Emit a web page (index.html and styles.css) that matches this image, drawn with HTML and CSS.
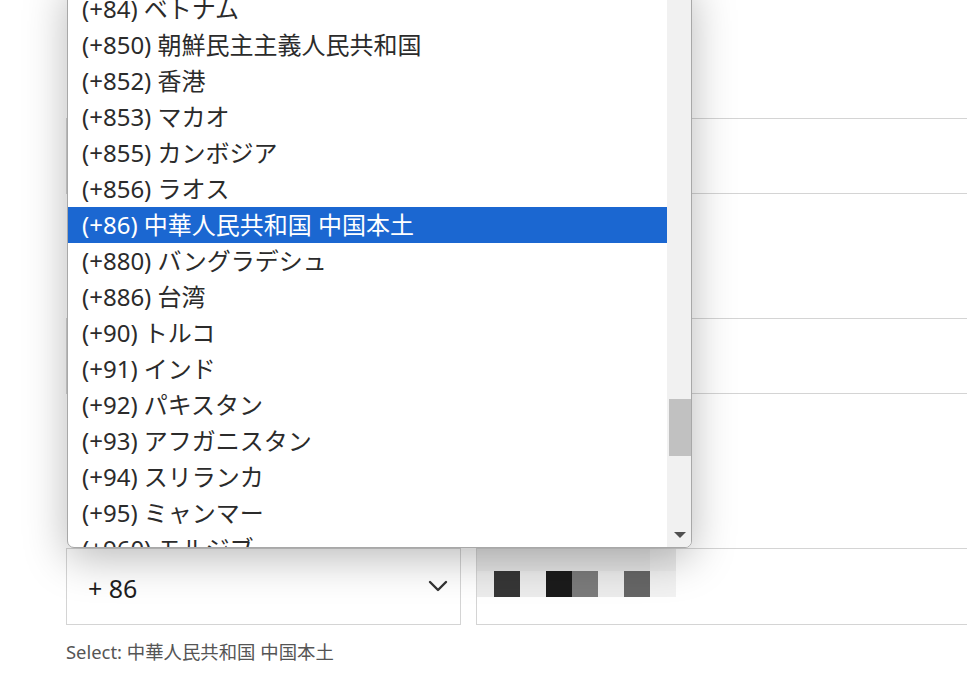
FILE: index.html
```html
<!DOCTYPE html>
<html lang="ja">
<head>
<meta charset="utf-8">
<title>Phone</title>
<link rel="stylesheet" href="styles.css">
</head>
<body>
<div class="page">
  <div class="field field-a"></div>
  <div class="field field-b"></div>
  <div class="phone-row">
    <div class="code-select">
      <span class="code-value">+ 86</span>
      <svg class="chevron" width="20" height="13" viewBox="0 0 20 13"><polyline points="2,2 10,10 18,2" fill="none" stroke="#333" stroke-width="2.4" stroke-linecap="round" stroke-linejoin="round"/></svg>
    </div>
    <div class="phone-input">
      <div class="mosaic">
        <div class="mrow mrow-1">
          <span class="m w17 c1"></span><span class="m c1"></span><span class="m c1"></span><span class="m c1"></span><span class="m c1"></span><span class="m c1"></span><span class="m c1"></span><span class="m c1 fade"></span>
        </div>
        <div class="mrow mrow-2">
          <span class="m w17 cl"></span><span class="m c36"></span><span class="m cl"></span><span class="m c1b"></span><span class="m c7b"></span><span class="m cl"></span><span class="m c66"></span><span class="m cl fade"></span>
        </div>
      </div>
    </div>
  </div>
  <p class="hint">Select: 中華人民共和国 中国本土</p>
</div>

<div class="popup">
  <ul class="options">
    <li>(+84) ベトナム</li>
    <li>(+850) 朝鮮民主主義人民共和国</li>
    <li>(+852) 香港</li>
    <li>(+853) マカオ</li>
    <li>(+855) カンボジア</li>
    <li>(+856) ラオス</li>
    <li class="selected">(+86) 中華人民共和国 中国本土</li>
    <li>(+880) バングラデシュ</li>
    <li>(+886) 台湾</li>
    <li>(+90) トルコ</li>
    <li>(+91) インド</li>
    <li>(+92) パキスタン</li>
    <li>(+93) アフガニスタン</li>
    <li>(+94) スリランカ</li>
    <li>(+95) ミャンマー</li>
    <li>(+960) モルジブ</li>
  </ul>
  <div class="scrollbar">
    <div class="thumb"></div>
    <div class="arrow-down"></div>
  </div>
</div>
</body>
</html>
```

FILE: styles.css
```css
html, body {
  margin: 0;
  padding: 0;
  background: #ffffff;
  overflow: hidden;
}

body {
  width: 967px;
  height: 695px;
  position: relative;
  font-family: "Noto Sans", "Noto Sans CJK JP", sans-serif;
  color: #333;
}

.page {
  padding: 118px 0 0 66px;
  margin-right: -20px;
}

.field {
  box-sizing: border-box;
  height: 76px;
  border: 1px solid #d4d4d4;
  background: #fff;
}

.field-a {
  margin-bottom: 124px;
}

.field-b {
  margin-bottom: 154px;
}

.phone-row {
  display: flex;
  gap: 15px;
  height: 77px;
}

.code-select {
  box-sizing: border-box;
  width: 395px;
  border: 1px solid #d4d4d4;
  background: #fff;
  display: flex;
  align-items: center;
  justify-content: space-between;
  padding: 0 12px 0 21px;
}

.code-value {
  font-family: "Noto Sans", sans-serif;
  font-size: 25px;
  color: #1e1e1e;
  position: relative;
  top: 1px;
}

.chevron {
  display: block;
}

.phone-input {
  flex: 1;
  box-sizing: border-box;
  border: 1px solid #d4d4d4;
  background: #fff;
  overflow: hidden;
}

.mosaic {
  display: flex;
  flex-direction: column;
}

.mrow {
  display: flex;
}

.mrow-1 {
  height: 22px;
}

.mrow-2 {
  height: 26px;
}

.m {
  display: block;
  width: 26px;
  height: 100%;
}

.w17 { width: 17px; }
.c1 { background: #e4e4e4; }
.cl { background: #ececec; }
.c36 { background: #363636; }
.c1b { background: #1b1b1b; }
.c7b { background: #7b7b7b; }
.c66 { background: #666666; }
.fade { opacity: 0.7; }

.hint {
  margin: 14px 0 0;
  font-size: 18.4px;
  line-height: 26px;
  color: #555;
}

.popup {
  position: absolute;
  left: 67px;
  top: -20px;
  width: 625px;
  height: 568px;
  box-sizing: border-box;
  border: 1px solid #a8a8a8;
  border-radius: 0 0 7px 7px;
  background: #fff;
  box-shadow: 0 10px 44px rgba(0, 0, 0, 0.28);
  overflow: hidden;
  display: flex;
}

.options {
  list-style: none;
  margin: 0;
  padding: 10px 0 0;
  flex: 1;
  font-family: "Noto Sans", "Noto Sans CJK JP", sans-serif;
  font-size: 24px;
  color: #2b2b2b;
}

.options li {
  height: 36px;
  line-height: 36px;
  padding-left: 14px;
  white-space: nowrap;
}

.options li.selected {
  background: #1b67d1;
  color: #ffffff;
}

.scrollbar {
  width: 24px;
  background: #f1f1f1;
  position: relative;
}

.thumb {
  position: absolute;
  left: 2px;
  right: 0;
  top: 418px;
  height: 57px;
  background: #c1c1c1;
}

.arrow-down {
  position: absolute;
  left: 7px;
  top: 551px;
  width: 0;
  height: 0;
  border-left: 6px solid transparent;
  border-right: 6px solid transparent;
  border-top: 6px solid #505050;
}
```
